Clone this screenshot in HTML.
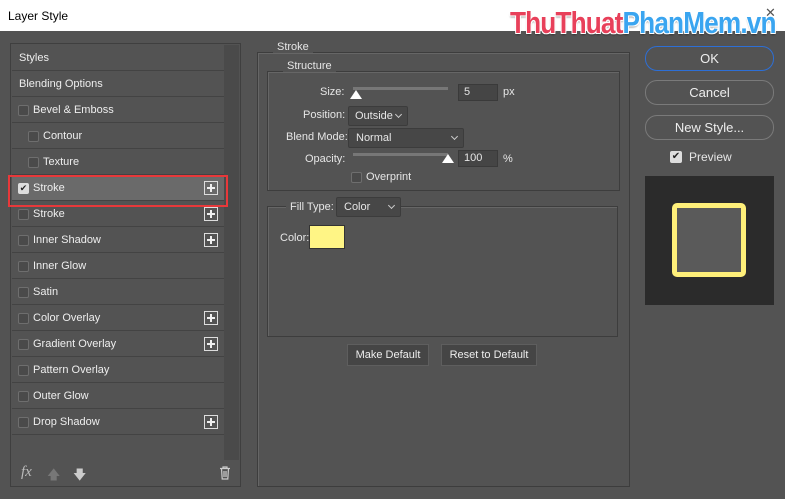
<!DOCTYPE html>
<html><head><meta charset="utf-8"><style>
*{box-sizing:border-box;margin:0;padding:0}
body{width:785px;height:499px;background:#535353;position:relative;overflow:hidden;font-family:"Liberation Sans",Tahoma,sans-serif;font-size:11px;color:#e6e6e6}
.a{position:absolute}
.title{left:0;top:0;width:785px;height:31px;background:#fff;color:#000;font-size:12px}
.wm{left:510px;top:5px;font-size:31px;font-weight:bold;letter-spacing:-1px;white-space:nowrap;transform-origin:0 0;transform:scaleX(0.845);text-shadow:-1px -1px 0 #fff,1px -1px 0 #fff,-1px 1px 0 #fff,1px 1px 0 #fff,0 2px 2px rgba(0,0,0,.4)}
.row{position:absolute;left:12px;width:212px;height:26px;border-bottom:1px solid #434343;line-height:27px;color:#eee}
.cb{position:absolute;top:8px;width:11px;height:11px;border:1px solid #6e6e6e;border-radius:2px;background:#4a4a4a}
.plus{position:absolute;right:6px;top:6px;width:14px;height:14px;border:1px solid #ddd}
.plus:before{content:"";position:absolute;left:2px;top:5px;width:8px;height:2px;background:#eee}
.plus:after{content:"";position:absolute;left:5px;top:2px;width:2px;height:8px;background:#eee}
.box{position:absolute;border:1px solid #3d3d3d;box-shadow:1px 1px 0 #666 inset}
.lbl{position:absolute;background:#535353;padding:0 4px}
.sel{position:absolute;background:#474747;border:1px solid #3c3c3c;border-radius:2px;height:20px;line-height:19px;padding-left:7px}
.sel:after{content:"";position:absolute;right:6px;top:5px;width:4px;height:4px;border-right:1px solid #ccc;border-bottom:1px solid #ccc;transform:rotate(45deg)}
.inp{position:absolute;background:#454545;border:1px solid #3a3a3a;height:17px;line-height:15px;padding-left:5px}
.btn{position:absolute;border:1px solid #7a7a7a;border-radius:12px;text-align:center;font-size:13px;height:25px;line-height:23px;color:#eee}
.sbtn{position:absolute;background:#454545;border:1px solid #5e5e5e;height:22px;line-height:21px;text-align:center;color:#eee}
.track{position:absolute;height:3px;background:#777}
.thumb{position:absolute;width:0;height:0;border-left:6px solid transparent;border-right:6px solid transparent;border-bottom:9px solid #fff}
</style></head><body>
<div class="a title"><span class="a" style="left:8px;top:9px">Layer Style</span><span class="a" style="left:765px;top:5px;font-size:13px;color:#555">✕</span></div>
<div class="a wm"><span style="color:#e8405a">ThuThuat</span><span style="color:#3aa5f0">PhanMem.vn</span></div>

<div class="a" style="left:10px;top:43px;width:231px;height:444px;border:1px solid #3f3f3f"></div>
<div class="a" style="left:224px;top:45px;width:15px;height:415px;background:#4a4a4a"></div>
<div class="row" style="top:45px;padding-left:7px">Styles</div>
<div class="row" style="top:71px;padding-left:7px">Blending Options</div>
<div class="row" style="top:97px"><div class="cb" style="left:6px"></div><span class="a" style="left:21px">Bevel &amp; Emboss</span></div>
<div class="row" style="top:123px"><div class="cb" style="left:16px"></div><span class="a" style="left:31px">Contour</span></div>
<div class="row" style="top:149px"><div class="cb" style="left:16px"></div><span class="a" style="left:31px">Texture</span></div>
<div class="row" style="top:175px;background:#6a6a6a"><div class="cb" style="left:6px;background:#ddd;border-color:#ddd;color:#222;font-size:9px;line-height:9px;text-align:center">✔</div><span class="a" style="left:21px">Stroke</span><div class="plus"></div></div>
<div class="row" style="top:201px"><div class="cb" style="left:6px"></div><span class="a" style="left:21px">Stroke</span><div class="plus"></div></div>
<div class="row" style="top:227px"><div class="cb" style="left:6px"></div><span class="a" style="left:21px">Inner Shadow</span><div class="plus"></div></div>
<div class="row" style="top:253px"><div class="cb" style="left:6px"></div><span class="a" style="left:21px">Inner Glow</span></div>
<div class="row" style="top:279px"><div class="cb" style="left:6px"></div><span class="a" style="left:21px">Satin</span></div>
<div class="row" style="top:305px"><div class="cb" style="left:6px"></div><span class="a" style="left:21px">Color Overlay</span><div class="plus"></div></div>
<div class="row" style="top:331px"><div class="cb" style="left:6px"></div><span class="a" style="left:21px">Gradient Overlay</span><div class="plus"></div></div>
<div class="row" style="top:357px"><div class="cb" style="left:6px"></div><span class="a" style="left:21px">Pattern Overlay</span></div>
<div class="row" style="top:383px"><div class="cb" style="left:6px"></div><span class="a" style="left:21px">Outer Glow</span></div>
<div class="row" style="top:409px"><div class="cb" style="left:6px"></div><span class="a" style="left:21px">Drop Shadow</span><div class="plus"></div></div>
<div class="a" style="left:8px;top:175px;width:220px;height:32px;border:2px solid #e8383a"></div>
<span class="a" style="left:21px;top:464px;font-size:15px;font-style:italic;color:#bbb;font-family:'Liberation Serif',serif">fx</span>
<span class="a" style="left:47px;top:466px;color:#777;font-size:13px">🡅</span>
<span class="a" style="left:73px;top:466px;color:#ccc;font-size:13px">🡇</span>
<svg class="a" style="left:219px;top:466px" width="12" height="14"><path d="M1 2.5h10M4 2.5V1h4v1.5M2.5 2.5l.7 10.5h5.6l.7-10.5M5 5v6M7 5v6" stroke="#ccc" fill="none" stroke-width="1.2"/></svg>

<div class="box" style="left:257px;top:52px;width:373px;height:435px"></div>
<div class="lbl" style="left:273px;top:41px">Stroke</div>
<div class="box" style="left:267px;top:71px;width:353px;height:120px"></div>
<div class="lbl" style="left:283px;top:60px">Structure</div>
<span class="a" style="left:320px;top:86px">Size:</span>
<div class="track" style="left:353px;top:87px;width:95px"></div>
<div class="thumb" style="left:350px;top:90px"></div>
<div class="inp" style="left:458px;top:84px;width:40px">5</div>
<span class="a" style="left:503px;top:86px">px</span>
<span class="a" style="left:303px;top:109px">Position:</span>
<div class="sel" style="left:348px;top:106px;width:60px;padding-left:6px">Outside</div>
<span class="a" style="left:286px;top:131px">Blend Mode:</span>
<div class="sel" style="left:348px;top:128px;width:116px">Normal</div>
<span class="a" style="left:305px;top:153px">Opacity:</span>
<div class="track" style="left:353px;top:153px;width:95px"></div>
<div class="thumb" style="left:442px;top:154px"></div>
<div class="inp" style="left:458px;top:150px;width:40px">100</div>
<span class="a" style="left:503px;top:153px">%</span>
<div class="cb" style="left:351px;top:172px"></div>
<span class="a" style="left:366px;top:171px">Overprint</span>
<div class="box" style="left:267px;top:206px;width:351px;height:131px"></div>
<div class="lbl" style="left:286px;top:201px">Fill Type:</div>
<div class="sel" style="left:336px;top:197px;width:65px">Color</div>
<span class="a" style="left:280px;top:232px">Color:</span>
<div class="a" style="left:309px;top:225px;width:36px;height:24px;background:#fff585;border:1px solid #333"></div>
<div class="sbtn" style="left:347px;top:344px;width:82px">Make Default</div>
<div class="sbtn" style="left:441px;top:344px;width:96px">Reset to Default</div>

<div class="btn" style="left:645px;top:46px;width:129px;border-color:#2d6fd6">OK</div>
<div class="btn" style="left:645px;top:80px;width:129px">Cancel</div>
<div class="btn" style="left:645px;top:115px;width:129px">New Style...</div>
<div class="a" style="left:670px;top:151px;width:12px;height:12px;background:#ddd;border-radius:2px;color:#222;font-size:10px;line-height:12px;text-align:center">✔</div>
<span class="a" style="left:689px;top:150px;font-size:12px">Preview</span>
<div class="a" style="left:645px;top:176px;width:129px;height:129px;background:#2b2b2b"></div>
<div class="a" style="left:672px;top:203px;width:74px;height:74px;border:5px solid #fff07a;border-radius:5px;background:#5a5a5a"></div>
</body></html>
